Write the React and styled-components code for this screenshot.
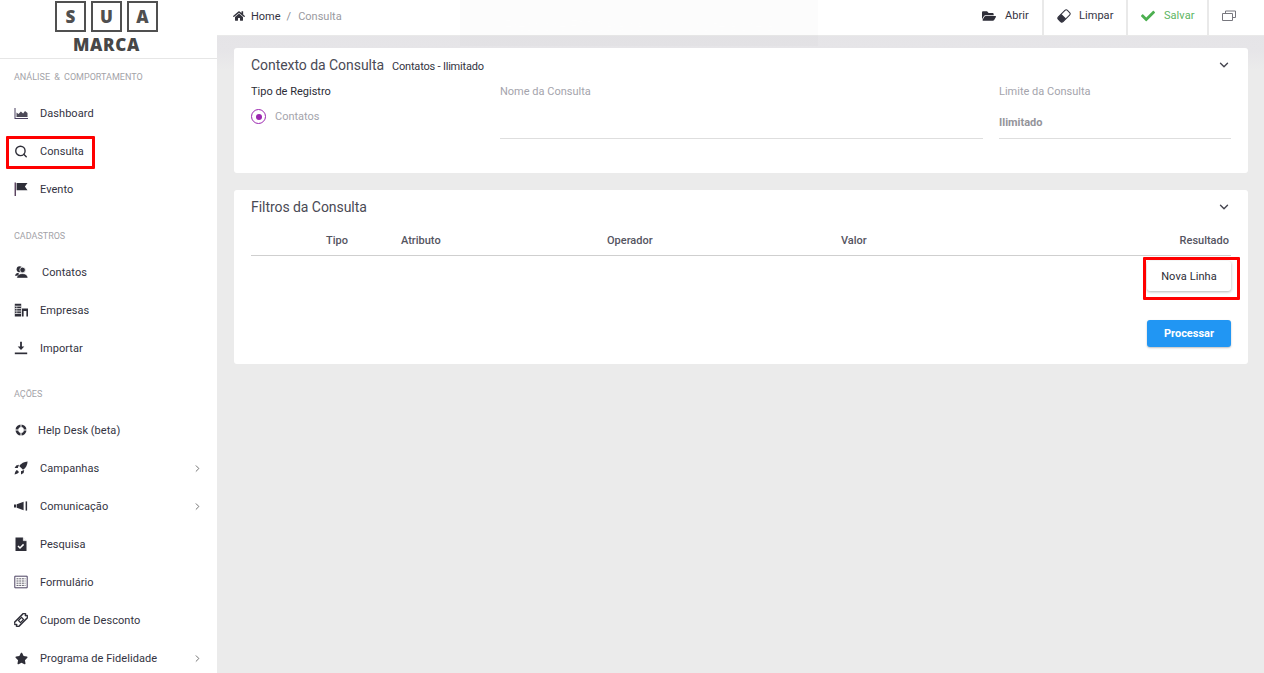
import React from "react";
import styled, { createGlobalStyle } from "styled-components";
import { FaHome, FaFolderOpen, FaCheck, FaStar } from "react-icons/fa";
import { ChevronRight, ChevronDown, Search } from "lucide-react";

const Global = createGlobalStyle`
  html, body { margin: 0; padding: 0; height: 100%; overflow: hidden; }
  body { font-family: Roboto, "Liberation Sans", sans-serif; font-size: 11px; color: #3a3a46; background: #ebebeb; }
  * { box-sizing: border-box; }
`;

const Page = styled.div`
  display: flex;
  width: 1264px;
  height: 673px;
  overflow: hidden;
`;

const Sidebar = styled.aside`
  width: 217px;
  flex: none;
  height: 673px;
  background: #fff;
  overflow: hidden;
`;

const LogoArea = styled.div`
  height: 59px;
  border-bottom: 1px solid #e6e6e6;
  display: flex;
  flex-direction: column;
  align-items: center;
  padding: 1px 4px 0 0;
`;

const LogoBoxes = styled.div`
  display: flex;
  gap: 5px;
`;

const LogoBox = styled.span`
  width: 31px;
  height: 31px;
  border: 2.5px solid #505050;
  display: flex;
  align-items: center;
  justify-content: center;
  font-family: "Open Sans", "Liberation Sans", sans-serif;
  font-weight: 800;
  font-size: 17px;
  color: #505050;
`;

const LogoWord = styled.div`
  font-family: "Open Sans", "Liberation Sans", sans-serif;
  font-weight: 800;
  font-size: 17px;
  line-height: 17px;
  letter-spacing: 0.7px;
  margin-top: 4px;
  color: #474747;
`;

const SectionLabel = styled.div`
  height: 35px;
  margin-top: ${(p) => p.$top || 0}px;
  padding: 1px 0 0 14px;
  display: flex;
  align-items: center;
  font-size: 9px;
  word-spacing: 2px;
  color: #a3a3a8;
`;

const NavRow = styled.div`
  position: relative;
  height: 38px;
  display: flex;
  align-items: center;
  padding: 0 14px;
  color: #33333f;
  font-size: 11px;
  letter-spacing: 0.05px;
`;

const NavIcon = styled.span`
  width: 14px;
  height: 14px;
  flex: none;
  display: flex;
  align-items: center;
  justify-content: center;
  color: #2e2e38;
  margin-right: ${(p) => p.$gap || 12}px;
`;

const NavText = styled.span`
  flex: 1;
  white-space: nowrap;
`;

const Highlight = styled.span`
  position: absolute;
  border: 3px solid #f00;
  border-radius: 1px;
  pointer-events: none;
`;

const ConsultaMark = styled(Highlight)`
  left: 6px;
  top: 4px;
  width: 89px;
  height: 33px;
`;

const Main = styled.div`
  flex: 1;
  min-width: 0;
  position: relative;
  background: linear-gradient(#e4e3e6 0, #e6e5e8 50px, #ebebeb 70px);
`;

const TopBar = styled.header`
  height: 36px;
  background: #fff;
  border-bottom: 1px solid #e9e9e9;
  display: flex;
  align-items: center;
  justify-content: space-between;
  padding-left: 16px;
`;

const Crumbs = styled.nav`
  display: flex;
  align-items: center;
  font-size: 11px;
  color: #33333f;
  margin-top: -2px;
`;

const HomeIcon = styled(FaHome)`
  width: 12px;
  height: 12px;
  margin-right: 6px;
  margin-top: -2px;
  color: #33333d;
`;

const CrumbSep = styled.span`
  margin: 0 7px 0 6px;
  color: #8b8b92;
`;

const CrumbNow = styled.span`
  color: #9a9aa0;
`;

const Actions = styled.div`
  display: flex;
  height: 100%;
`;

const ActionBtn = styled.button`
  height: 35px;
  border: 0;
  border-right: ${(p) => (p.$last ? "0" : "2px solid #e9e9e9")};
  background: transparent;
  width: ${(p) => p.$w}px;
  display: flex;
  align-items: center;
  justify-content: flex-start;
  padding: 0 0 4px ${(p) => p.$pl ?? 13}px;
  gap: ${(p) => p.$gap || 9}px;
  font: 400 11px Roboto, sans-serif;
  letter-spacing: 0.05px;
  color: ${(p) => p.$color || "#33333f"};
`;

const Content = styled.main`
  padding: 12px 16px 0 17px;
  display: flex;
  flex-direction: column;
  gap: 17px;
`;

const Card = styled.section`
  background: #fff;
  border-radius: 3px;
  height: ${(p) => p.$h}px;
  padding: 0 17px;
`;

const CardHead = styled.div`
  height: 34px;
  margin-bottom: 1px;
  display: flex;
  align-items: center;
  justify-content: space-between;
`;

const CardTitleWrap = styled.div`
  display: flex;
  align-items: baseline;
  gap: 8px;
`;

const CardTitle = styled.h2`
  margin: 0;
  font-size: 14px;
  font-weight: 400;
  letter-spacing: -0.05px;
  color: #4a4a55;
`;

const CardSub = styled.span`
  font-size: 11px;
  color: #33333f;
  letter-spacing: -0.2px;
`;

const Collapse = styled(ChevronDown)`
  width: 14px;
  height: 14px;
  stroke-width: 2.4;
  color: #44444f;
  margin-right: 0;
`;

const FieldGrid = styled.div`
  display: grid;
  grid-template-columns: 233px 483px 232px;
  column-gap: 16px;
`;

const Field = styled.div`
  display: flex;
  flex-direction: column;
`;

const FieldLabel = styled.div`
  height: 15px;
  line-height: 15px;
  font-size: 11px;
  margin-top: 1px;
  color: ${(p) => (p.$dark ? "#2c2c36" : "#a4a4ac")};
`;

const InputLine = styled.div`
  height: 25px;
  margin-top: 15px;
  border-bottom: 1px solid #dedede;
  font-size: 11px;
  font-weight: 700;
  color: #94949a;
  padding-top: 2px;
`;

const RadioRow = styled.label`
  display: flex;
  align-items: center;
  gap: 9px;
  margin-top: 10px;
  font-size: 11px;
  color: #a4a4ac;
`;

const RadioOuter = styled.span`
  width: 15px;
  height: 15px;
  border: 1.5px solid #9c27b0;
  border-radius: 50%;
  display: flex;
  align-items: center;
  justify-content: center;
`;

const RadioDot = styled.span`
  width: 6px;
  height: 6px;
  border-radius: 50%;
  background: #9c27b0;
`;

const TableHead = styled.div`
  display: grid;
  grid-template-columns: 150px 206px 234px 1fr auto;
  height: 32px;
  align-items: center;
  border-bottom: 1px solid #cfcfcf;
  font-size: 11px;
  font-weight: 500;
  color: #55555f;
  padding: 1px 2px 0 0;
  margin-top: -1px;
`;

const TipoCol = styled.span`
  padding-left: 75px;
`;

const TableFoot = styled.div`
  display: flex;
  flex-direction: column;
  align-items: flex-end;
`;

const ButtonBox = styled.div`
  position: relative;
  margin-top: 5px;
`;

const LinhaMark = styled(Highlight)`
  left: -4px;
  top: -4px;
  width: 97px;
  height: 43px;
`;

const PlainBtn = styled.button`
  width: 84px;
  height: 30px;
  border: 0;
  border-radius: 3px;
  background: #fff;
  box-shadow: 0 1px 3px rgba(0, 0, 0, 0.3);
  font: 400 11px Roboto, sans-serif;
  letter-spacing: 0.1px;
  color: #2c2c36;
  padding: 0;
  display: block;
`;

const PrimaryBtn = styled.button`
  width: 84px;
  height: 27px;
  margin-top: 29px;
  border: 0;
  border-radius: 3px;
  background: #2196f3;
  box-shadow: 0 1px 2px rgba(0, 0, 0, 0.25);
  font: 700 11px Roboto, sans-serif;
  color: #fff;
  padding: 0;
`;

const FullscreenHint = styled.div`
  position: absolute;
  left: 243px;
  top: 0;
  width: 358px;
  height: 46px;
  background: rgba(0, 0, 0, 0.012);
  color: #fdfdfd;
  font-size: 14px;
  display: flex;
  align-items: center;
  justify-content: center;
  padding-top: 6px;
  pointer-events: none;
`;

const Svg = ({ children, w = 14, h = 14, vb = "0 0 14 14" }) => (
  <svg width={w} height={h} viewBox={vb} fill="currentColor">{children}</svg>
);

const IDash = () => (
  <Svg>
    <path d="M.5 2v11h13.5v-1H1.5V2z" fill="#4a4060" />
    <path d="M2.5 11V6.5l2 1.6 2.4-2.6 2.2 2 1.9-2.4 2.5 1.8V11z" fill="#4d4a58" />
  </Svg>
);
const IFlag = () => (
  <Svg>
    <path d="M.6.5h1.3v13.5H.6z" fill="#4a3050" />
    <path d="M2.6 1h10.9l-2.6 3.6 2.6 3.6H2.6z" />
  </Svg>
);
const IUsers = () => (
  <Svg w={15} h={14} vb="0 0 15 14">
    <circle cx="6" cy="4" r="3.2" />
    <path d="M1 11c.5-2 2.2-3 4-3.2V11z" />
    <circle cx="9.2" cy="4.8" r="3" stroke="#fff" strokeWidth=".8" />
    <path d="M3 13.4c.2-3 2.8-4.6 6-4.6s5.6 1.6 5.8 4.6z" stroke="#fff" strokeWidth=".4" />
  </Svg>
);
const IBuilding = () => (
  <Svg>
    <path d="M.8.8h6.4v12.6H.8zM8 5.6h6v7.8h-1.6V8h-2.8v5.4H8z" />
    <path d="M.8 3.2h6.4M.8 5.6h6.4M.8 8h6.4M.8 10.4h6.4" stroke="#fff" strokeWidth=".8" />
    <path d="M2.8 3v8" stroke="#fff" strokeWidth=".5" />
  </Svg>
);
const IImport = () => (
  <Svg>
    <path d="M6.1.8h1.8v4.6h2.4L7 9 3.7 5.4h2.4z" />
    <path d="M.8 11.5h12.4v1.7H.8z" />
  </Svg>
);
const ILifeRing = () => (
  <Svg w={12} h={12} vb="0 0 12 12">
    <circle cx="6" cy="6" r="4.2" fill="none" stroke="currentColor" strokeWidth="2.6" />
    <path d="M0 6h3M9 6h3M6 0v3M6 9v3" stroke="#fff" strokeWidth="1" />
  </Svg>
);
const IRocket = () => (
  <Svg>
    <path d="M13.6.4C10 .6 7.2 2 5.2 5l3.8 3.8c3-2 4.4-4.8 4.6-8.4z" />
    <path d="M5 3.8 2.2 4.4.6 7h3.2zM10.2 9l-.6 3-2.6 1.6v-3.4zM3 9c-1.2.6-2 2-2.4 4.4C3 13 4.4 12.2 5 11z" />
  </Svg>
);
const IMega = () => (
  <Svg w={14} h={10} vb="0 0 14 10">
    <path d="M0 3.4h2.2v3.2H0zM2.8 3.2 9.6.8v8.4L2.8 6.8z" />
    <path d="M11.6.4h1.5v9.2h-1.5z" />
  </Svg>
);
const IDoc = () => (
  <Svg>
    <path d="M1.5.5h7.4l3.6 3.6V14h-11z" />
    <path d="M9.2.5l3.3 3.3H9.2z" fill="#fff" stroke="#fff" strokeWidth=".3" />
    <path d="M4 9l2 2 3.6-3.6" stroke="#fff" strokeWidth="1.5" fill="none" />
  </Svg>
);
const IForm = () => (
  <Svg>
    <path d="M.8 1.2h12.4v11.6H.8z" fill="none" stroke="#4a4060" />
    <path d="M2.5 3.8h9M2.5 6h9M2.5 8.2h9M2.5 10.4h9" stroke="#4d4a58" strokeDasharray="2 .7" strokeWidth=".9" />
  </Svg>
);
const ICoupon = () => (
  <Svg>
    <g transform="rotate(-45 7 7)">
      <path d="M-.4 4h14.8v2a1 1 0 0 0 0 2v2H-.4V8a1 1 0 0 0 0-2z" fill="none" stroke="currentColor" strokeWidth="1.5" />
      <path d="M4.8 5.6h4.4v2.8H4.8z" fill="none" stroke="currentColor" strokeWidth="1.2" />
    </g>
  </Svg>
);
const IEraser = () => (
  <Svg>
    <g transform="rotate(-45 7 7)">
      <rect x="0.6" y="3.7" width="12.8" height="6.6" rx="1.8" fill="none" stroke="currentColor" strokeWidth="1" />
      <path d="M2.4 3.7H6.6v6.6H2.4A1.8 1.8 0 0 1 .6 8.5v-3a1.8 1.8 0 0 1 1.8-1.8z" />
    </g>
  </Svg>
);
const IWindows = () => (
  <Svg w={14} h={12} vb="0 0 14 12">
    <path d="M3.5 3V1h10v6.5h-3.4" fill="none" stroke="#77777e" />
    <path d="M.5 3.5h10v7H.5z" fill="none" stroke="#77777e" />
  </Svg>
);

const NavItem = ({ icon, gap, arrow, children, mark }) => (
  <NavRow>
    <NavIcon $gap={gap}>{icon}</NavIcon>
    <NavText>{children}</NavText>
    {arrow && <ChevronRight size={11} color="#666" strokeWidth={2} />}
    {mark && <ConsultaMark />}
  </NavRow>
);

export default function App() {
  return (
    <Page>
      <Global />
      <Sidebar>
        <LogoArea>
          <LogoBoxes>
            <LogoBox>S</LogoBox>
            <LogoBox>U</LogoBox>
            <LogoBox>A</LogoBox>
          </LogoBoxes>
          <LogoWord>MARCA</LogoWord>
        </LogoArea>
        <SectionLabel>ANÁLISE &amp; COMPORTAMENTO</SectionLabel>
        <NavItem icon={<IDash />}>Dashboard</NavItem>
        <NavItem icon={<Search size={15} strokeWidth={2.4} />} mark>Consulta</NavItem>
        <NavItem icon={<IFlag />}>Evento</NavItem>
        <SectionLabel $top={10}>CADASTROS</SectionLabel>
        <NavItem icon={<IUsers />} gap={14}>Contatos</NavItem>
        <NavItem icon={<IBuilding />}>Empresas</NavItem>
        <NavItem icon={<IImport />}>Importar</NavItem>
        <SectionLabel $top={9}>AÇÕES</SectionLabel>
        <NavItem icon={<ILifeRing />} gap={10}>Help Desk (beta)</NavItem>
        <NavItem icon={<IRocket />} arrow>Campanhas</NavItem>
        <NavItem icon={<IMega />} arrow>Comunicação</NavItem>
        <NavItem icon={<IDoc />}>Pesquisa</NavItem>
        <NavItem icon={<IForm />}>Formulário</NavItem>
        <NavItem icon={<ICoupon />}>Cupom de Desconto</NavItem>
        <NavItem icon={<FaStar size={13} />} arrow>Programa de Fidelidade</NavItem>
      </Sidebar>
      <Main>
        <TopBar>
          <Crumbs>
            <HomeIcon />
            <span>Home</span>
            <CrumbSep>/</CrumbSep>
            <CrumbNow>Consulta</CrumbNow>
          </Crumbs>
          <Actions>
            <ActionBtn $w={62} $pl={0}><FaFolderOpen size={14} color="#2e2e38" />Abrir</ActionBtn>
            <ActionBtn $w={84} $gap={8}><IEraser />Limpar</ActionBtn>
            <ActionBtn $w={81} $color="#5cb562"><FaCheck size={14} color="#4caf50" />Salvar</ActionBtn>
            <ActionBtn $w={55} $last><IWindows /></ActionBtn>
          </Actions>
        </TopBar>
        <FullscreenHint>Pressione F11 para sair do modo tela cheia</FullscreenHint>
        <Content>
          <Card $h={125}>
            <CardHead>
              <CardTitleWrap>
                <CardTitle>Contexto da Consulta</CardTitle>
                <CardSub>Contatos - Ilimitado</CardSub>
              </CardTitleWrap>
              <Collapse />
            </CardHead>
            <FieldGrid>
              <Field>
                <FieldLabel $dark>Tipo de Registro</FieldLabel>
                <RadioRow>
                  <RadioOuter><RadioDot /></RadioOuter>
                  Contatos
                </RadioRow>
              </Field>
              <Field>
                <FieldLabel>Nome da Consulta</FieldLabel>
                <InputLine />
              </Field>
              <Field>
                <FieldLabel>Limite da Consulta</FieldLabel>
                <InputLine>Ilimitado</InputLine>
              </Field>
            </FieldGrid>
          </Card>
          <Card $h={174}>
            <CardHead>
              <CardTitle>Filtros da Consulta</CardTitle>
              <Collapse />
            </CardHead>
            <TableHead>
              <TipoCol>Tipo</TipoCol>
              <span>Atributo</span>
              <span>Operador</span>
              <span>Valor</span>
              <span>Resultado</span>
            </TableHead>
            <TableFoot>
              <ButtonBox>
                <PlainBtn>Nova Linha</PlainBtn>
                <LinhaMark />
              </ButtonBox>
              <PrimaryBtn>Processar</PrimaryBtn>
            </TableFoot>
          </Card>
        </Content>
      </Main>
    </Page>
  );
}
